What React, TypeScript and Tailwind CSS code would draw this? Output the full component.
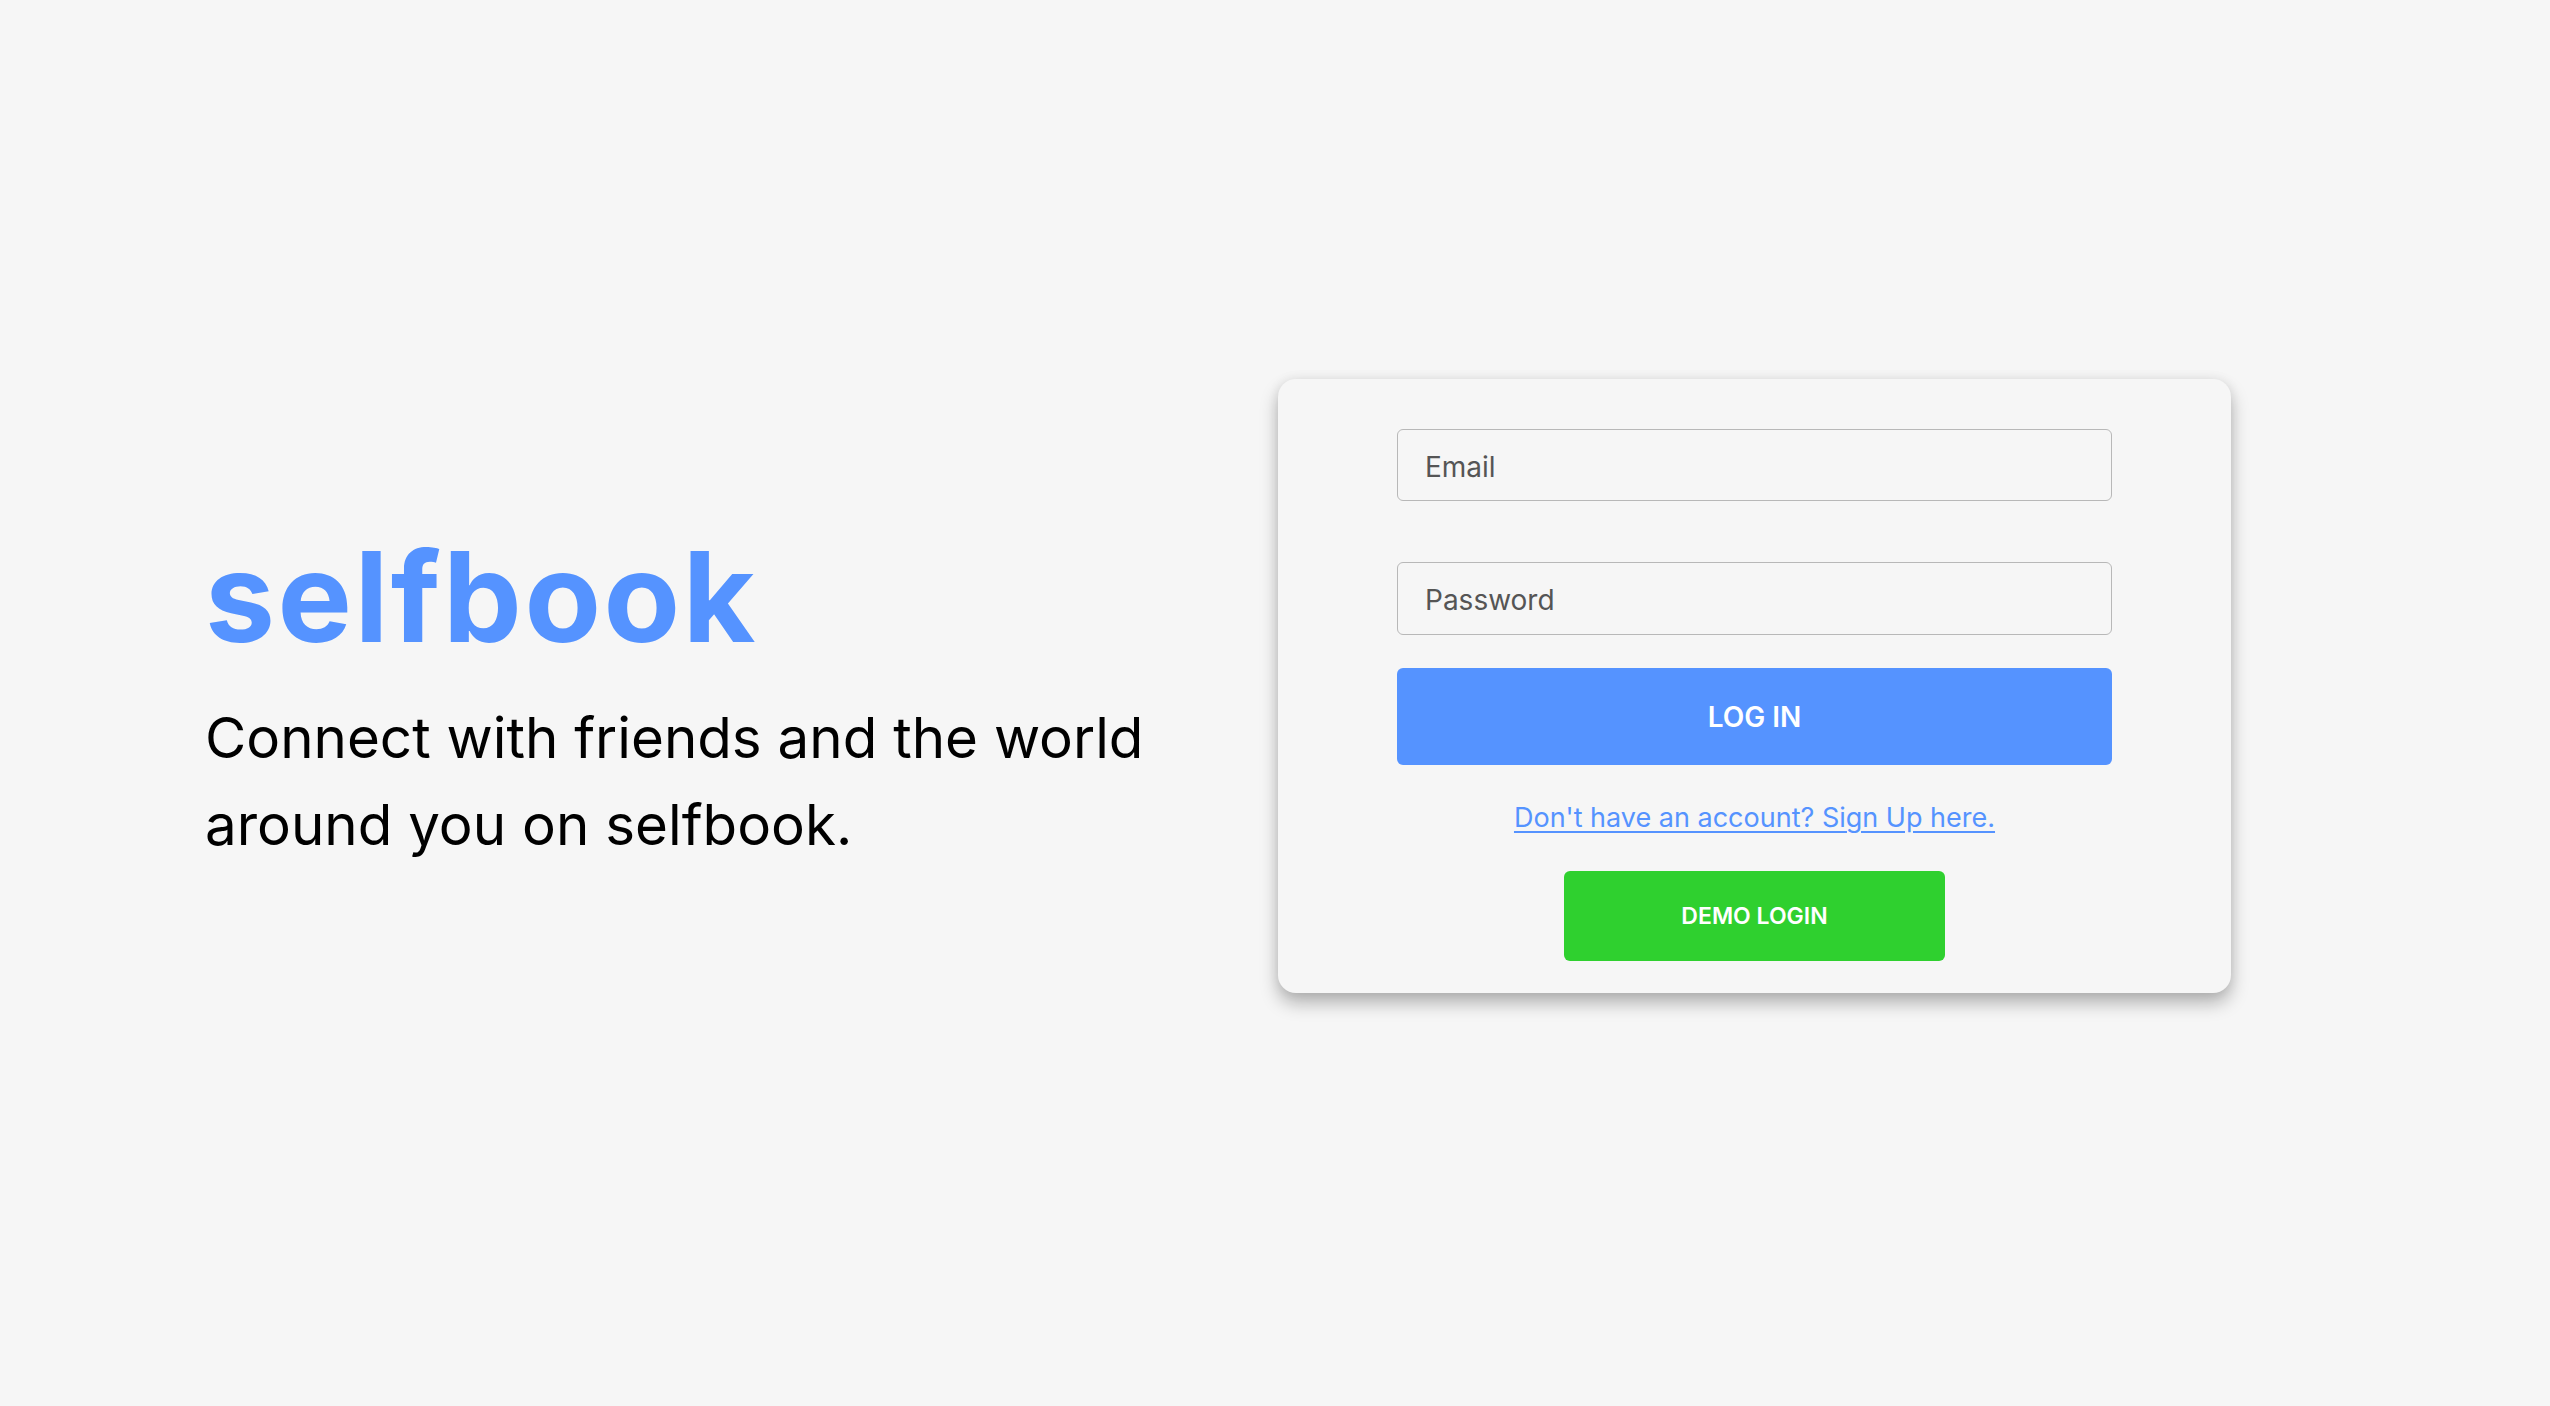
import { useState } from 'react';

const font = { fontFamily: 'Inter, "Noto Sans", sans-serif' };

function LoginCard() {
  const [email, setEmail] = useState('');
  const [password, setPassword] = useState('');

  return (
    <div className="w-[953px] rounded-[18px] bg-[#f6f6f6] shadow-[0_10px_18px_rgba(0,0,0,0.28),0_0_12px_rgba(0,0,0,0.07)] pt-[50px] pb-[32px] flex flex-col items-center">
      <input
        type="email"
        placeholder="Email"
        value={email}
        onChange={(e) => setEmail(e.target.value)}
        className="w-[715px] h-[72px] rounded-[6px] border-[1.5px] border-[#b8b8b8] bg-transparent px-[27px] pt-[3px] text-[28px] text-[#333] placeholder:text-[#555] outline-none"
      />
      <input
        type="password"
        placeholder="Password"
        value={password}
        onChange={(e) => setPassword(e.target.value)}
        className="mt-[61px] w-[715px] h-[73px] rounded-[6px] border-[1.5px] border-[#b8b8b8] bg-transparent px-[27px] pt-[3px] text-[28px] text-[#333] placeholder:text-[#555] outline-none"
      />
      <button className="mt-[33px] w-[715px] h-[97px] rounded-[6px] bg-[#5593ff] text-white text-[28px] font-semibold">
        LOG IN
      </button>
      <a href="#" className="mt-[36px] text-[27px] leading-[34px] text-[#5593ff] underline underline-offset-[4px]">
        Don't have an account? Sign Up here.
      </a>
      <button className="mt-[36px] w-[381px] h-[90px] rounded-[6px] bg-[#2fd02f] text-white text-[23px] font-semibold">
        DEMO LOGIN
      </button>
    </div>
  );
}

export default function App() {
  return (
    <div className="min-h-screen w-full bg-[#f6f6f6] flex items-center pb-[34px]" style={font}>
      <div className="w-[1278px] pl-[205px] flex flex-col mt-[18px]">
        <h1 className="text-[125px] leading-[150px] font-bold text-[#5593ff] tracking-[2.5px]">selfbook</h1>
        <p className="mt-[22px] text-[56.5px] leading-[87px] text-black w-[1000px]">
          Connect with friends and the world
          <br />
          around you on selfbook.
        </p>
      </div>
      <LoginCard />
    </div>
  );
}
